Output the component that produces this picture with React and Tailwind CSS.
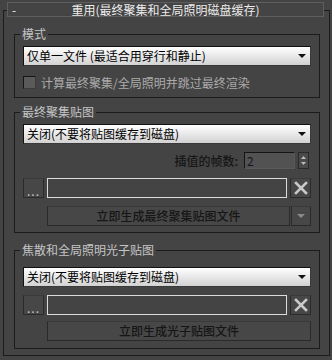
import React from "react";

const Arrow = ({ color = "#111" }) => (
  <svg width="8" height="4" viewBox="0 0 8 4">
    <path d="M0 0h8L4 4z" fill={color} />
  </svg>
);

const Dropdown = ({ label }) => (
  <div className="flex h-[20px] items-center border border-[#111] border-r-[#3a3a3a] border-b-[#3a3a3a] bg-linear-to-b from-white to-[#d2d2d2] pl-[3px] pr-[4px] text-[12px] leading-none text-black">
    <span className="flex-1 whitespace-nowrap">{label}</span>
    <Arrow />
  </div>
);

const Group = ({ title, className = "", children }) => (
  <fieldset
    className={`ml-[10px] mr-[9px] border border-[#1c1c1c] px-[8px] ${className}`}
  >
    <legend className="-ml-[3px] px-[2px] text-[12px] leading-[14px] text-[#c4c4c4]">
      {title}
    </legend>
    {children}
  </fieldset>
);

const Button = ({ children, className = "" }) => (
  <div
    className={`flex h-[20px] items-center justify-center border border-[#2a2a2a] border-t-[#3a3a3a] bg-[#474747] text-[12px] leading-none ${className}`}
  >
    {children}
  </div>
);

const FileRow = ({ className = "" }) => (
  <div className={`flex h-[20px] gap-[3px] ${className}`}>
    <Button className="w-[21px] text-[10px] text-[#c8c8c8]">
      <span className="mt-[5px] tracking-[1px]">...</span>
    </Button>
    <div className="flex-1 border border-[#dcdcdc] bg-[#444]" />
    <Button className="w-[21px]">
      <svg width="14" height="14" viewBox="0 0 14 14">
        <path
          d="M2 2L12 12M12 2L2 12"
          stroke="#c9c9c9"
          strokeWidth="2.6"
          strokeLinecap="square"
        />
      </svg>
    </Button>
  </div>
);

export default function App() {
  return (
    <div className="h-[360px] w-[332px] overflow-hidden bg-[#444] pl-[3px] pt-[10px] font-['Noto_Sans_CJK_SC','Noto_Sans',sans-serif]">
      <div className="w-[327px] border border-[#1c1c1c] pb-[6px]">
        {/* rollout header */}
        <div className="-mt-[9px] ml-[3px] mr-[5px] grid h-[15px] grid-cols-[20px_1fr_20px] items-center border border-[#5e5e5e] bg-[#444] text-[12px] leading-none text-[#ececec]">
          <span className="pl-[4px]">-</span>
          <span className="text-center whitespace-nowrap">
            重用(最终聚集和全局照明磁盘缓存)
          </span>
          <span />
        </div>

        {/* mode */}
        <Group title="模式" className="mt-[10px] pt-[5px] pb-[8px]">
          <Dropdown label="仅单一文件 (最适合用穿行和静止)" />
          <div className="mt-[10px] flex h-[13px] items-center">
            <div className="h-[13px] w-[13px] border border-[#151515] border-r-[#3c3c3c] border-b-[#3c3c3c] bg-[#5a5a5a]" />
            <span className="ml-[5px] whitespace-nowrap text-[12px] leading-none text-[#ababab]">
              计算最终聚集/全局照明并跳过最终渲染
            </span>
          </div>
        </Group>

        {/* final gather map */}
        <Group title="最终聚集贴图" className="mt-[7px] pt-[5px] pb-[6px]">
          <Dropdown label="关闭(不要将贴图缓存到磁盘)" />
          <div className="mt-[8px] flex h-[17px] items-center justify-end">
            <span className="text-[12px] font-medium leading-none text-[#161616]">
              插值的帧数:
            </span>
            <div className="ml-[6px] flex h-[17px] w-[51px] items-center border border-[#151515] border-r-[#5a5a5a] border-b-[#5a5a5a] bg-[#525252] pl-[2px] text-[12px] leading-none text-[#15151f]">
              2
            </div>
            <div className="ml-[3px] mr-[2px] flex h-[17px] w-[11px] flex-col items-center justify-center gap-[3px] border border-[#2a2a2a] bg-[#4a4a4a]">
              <svg width="5" height="3" viewBox="0 0 5 3">
                <path d="M0 3h5L2.5 0z" fill="#bdbdbd" />
              </svg>
              <svg width="5" height="3" viewBox="0 0 5 3">
                <path d="M0 0h5L2.5 3z" fill="#bdbdbd" />
              </svg>
            </div>
          </div>
          <FileRow className="mt-[9px]" />
          <div className="mt-[8px] flex h-[20px] gap-[1px] pl-[24px]">
            <Button className="flex-1 font-medium text-[#161616]">
              立即生成最终聚集贴图文件
            </Button>
            <Button className="w-[20px]">
              <Arrow color="#8a8a8a" />
            </Button>
          </div>
        </Group>

        {/* caustics and GI photon map */}
        <Group title="焦散和全局照明光子贴图" className="mt-[10px] pt-[10px] pb-[7px]">
          <Dropdown label="关闭(不要将贴图缓存到磁盘)" />
          <FileRow className="mt-[8px]" />
          <div className="mt-[6px] pl-[24px]">
            <Button className="font-medium text-[#161616]">立即生成光子贴图文件</Button>
          </div>
        </Group>
      </div>
    </div>
  );
}
